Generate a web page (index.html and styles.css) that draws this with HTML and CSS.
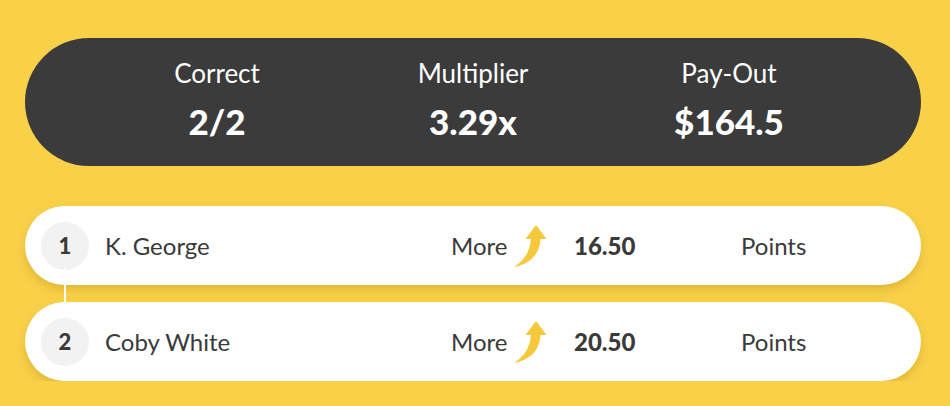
FILE: index.html
```html
<!DOCTYPE html>
<html>
<head>
<meta charset="utf-8">
<link rel="stylesheet" href="styles.css">
</head>
<body>
<div class="wrap">
  <div class="summary">
    <div class="stat"><div class="label">Correct</div><div class="value">2/2</div></div>
    <div class="stat"><div class="label">Multiplier</div><div class="value">3.29x</div></div>
    <div class="stat"><div class="label">Pay-Out</div><div class="value">$164.5</div></div>
  </div>
  <div class="picks">
    <div class="pick">
      <div class="num">1</div>
      <div class="name">K. George</div>
      <div class="dir">More</div>
      <svg class="arrow" viewBox="0 0 40 46" width="40" height="46"><path d="M27 3 L37.5 17 L31.5 17 C31 31 22 42 5 45 C16 38 21 29 22 17 L16.5 17 Z"/></svg>
      <div class="line">16.50</div>
      <div class="stat-name">Points</div>
    </div>
    <div class="connector"></div>
    <div class="pick">
      <div class="num">2</div>
      <div class="name">Coby White</div>
      <div class="dir">More</div>
      <svg class="arrow" viewBox="0 0 40 46" width="40" height="46"><path d="M27 3 L37.5 17 L31.5 17 C31 31 22 42 5 45 C16 38 21 29 22 17 L16.5 17 Z"/></svg>
      <div class="line">20.50</div>
      <div class="stat-name">Points</div>
    </div>
  </div>
</div>
</body>
</html>
```
FILE: styles.css
```css
html, body {
  margin: 0;
  padding: 0;
  background: #f9d148;
  font-family: "Lato", "Open Sans", sans-serif;
}
.wrap {
  width: 896px;
  margin-left: 25px;
  padding-top: 38px;
}
.summary {
  box-sizing: border-box;
  height: 128px;
  padding-bottom: 6px;
  background: #3b3b3b;
  border-radius: 64px;
  display: grid;
  grid-template-columns: 256px 256px 256px;
  justify-content: center;
  align-content: center;
  color: #fff;
}
.stat {
  text-align: center;
}
.label {
  font-size: 26px;
  line-height: 30px;
  padding-bottom: 13px;
}
.value {
  font-size: 35px;
  font-weight: 900;
  line-height: 40px;
}
.picks {
  margin-top: 40px;
  position: relative;
  display: flex;
  flex-direction: column;
  gap: 17px;
}
.pick {
  position: relative;
  z-index: 1;
  height: 79px;
  background: #fff;
  border-radius: 40px;
  box-shadow: 0 5px 10px rgba(150, 110, 0, 0.25);
  display: flex;
  align-items: center;
  padding-left: 16px;
  color: #3a3a3a;
  font-size: 24px;
}
.connector {
  position: absolute;
  left: 39px;
  top: 62px;
  width: 2px;
  height: 50px;
  background: #fff;
  z-index: 2;
}
.num {
  width: 48px;
  height: 48px;
  border-radius: 50%;
  background: #f2f2f2;
  display: flex;
  align-items: center;
  justify-content: center;
  font-weight: 900;
  font-size: 22px;
  margin-right: 16px;
  flex: none;
}
.name {
  width: 346px;
}
.dir {
  width: 60px;
}
.arrow {
  fill: #f6c83c;
  margin-top: -2px;
  margin-left: -2px;
}
.line {
  margin-left: 25px;
  width: 167px;
  font-weight: 900;
}
```
